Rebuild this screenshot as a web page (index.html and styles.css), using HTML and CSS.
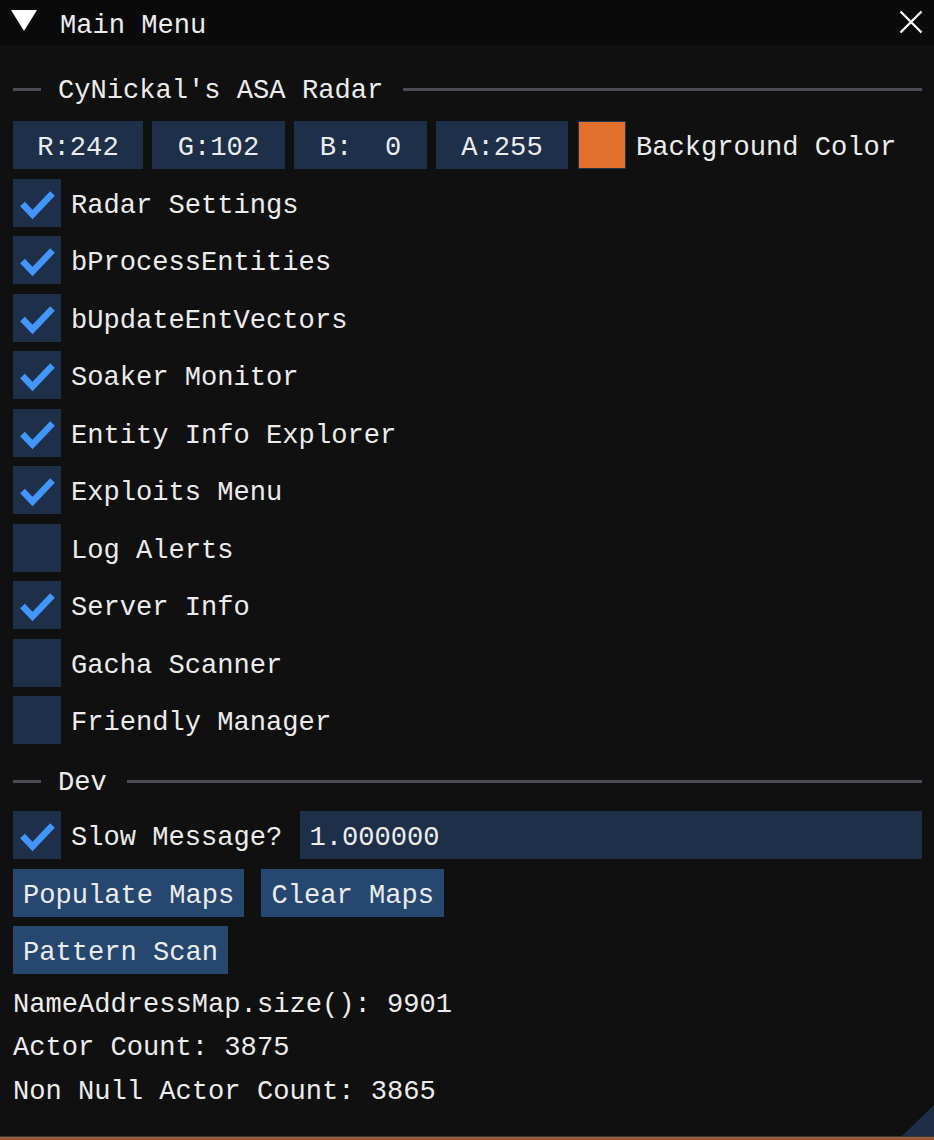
FILE: index.html
```html
<!DOCTYPE html>
<html>
<head>
<meta charset="utf-8">
<title>Main Menu</title>
<link rel="stylesheet" href="styles.css">
</head>
<body>
<div class="window">
  <div class="titlebar">
    <svg class="collapse" width="26" height="21" viewBox="0 0 26 21"><polygon points="0,0 26,0 13,21" fill="#ffffff"/></svg>
    <span class="title">Main Menu</span>
    <svg class="close" width="24" height="24" viewBox="0 0 24 24"><path d="M1.5 1.5 L22.5 22.5 M22.5 1.5 L1.5 22.5" stroke="#ffffff" stroke-width="2.3" fill="none"/></svg>
  </div>
  <div class="content">
    <div class="sep sep-top"><span class="sep-line short"></span><span class="sep-text">CyNickal's ASA Radar</span><span class="sep-line long"></span></div>
    <div class="row">
      <div class="drags">
        <div class="frame drag drag-r">R:242</div>
        <div class="frame drag drag-g">G:102</div>
        <div class="frame drag drag-b">B:  0</div>
        <div class="frame drag drag-a">A:255</div>
      </div>
      <div class="swatch"></div>
      <span class="label label-wide">Background Color</span>
    </div>
    <div class="row"><div class="check"><svg width="48" height="48" viewBox="0 0 48 48"><polyline points="9.5,25 19.5,35.5 39.5,14.5" fill="none" stroke="#4296fa" stroke-width="6.5"/></svg></div><span class="label">Radar Settings</span></div>
    <div class="row"><div class="check"><svg width="48" height="48" viewBox="0 0 48 48"><polyline points="9.5,25 19.5,35.5 39.5,14.5" fill="none" stroke="#4296fa" stroke-width="6.5"/></svg></div><span class="label">bProcessEntities</span></div>
    <div class="row"><div class="check"><svg width="48" height="48" viewBox="0 0 48 48"><polyline points="9.5,25 19.5,35.5 39.5,14.5" fill="none" stroke="#4296fa" stroke-width="6.5"/></svg></div><span class="label">bUpdateEntVectors</span></div>
    <div class="row"><div class="check"><svg width="48" height="48" viewBox="0 0 48 48"><polyline points="9.5,25 19.5,35.5 39.5,14.5" fill="none" stroke="#4296fa" stroke-width="6.5"/></svg></div><span class="label">Soaker Monitor</span></div>
    <div class="row"><div class="check"><svg width="48" height="48" viewBox="0 0 48 48"><polyline points="9.5,25 19.5,35.5 39.5,14.5" fill="none" stroke="#4296fa" stroke-width="6.5"/></svg></div><span class="label">Entity Info Explorer</span></div>
    <div class="row"><div class="check"><svg width="48" height="48" viewBox="0 0 48 48"><polyline points="9.5,25 19.5,35.5 39.5,14.5" fill="none" stroke="#4296fa" stroke-width="6.5"/></svg></div><span class="label">Exploits Menu</span></div>
    <div class="row"><div class="check"></div><span class="label">Log Alerts</span></div>
    <div class="row"><div class="check"><svg width="48" height="48" viewBox="0 0 48 48"><polyline points="9.5,25 19.5,35.5 39.5,14.5" fill="none" stroke="#4296fa" stroke-width="6.5"/></svg></div><span class="label">Server Info</span></div>
    <div class="row"><div class="check"></div><span class="label">Gacha Scanner</span></div>
    <div class="row"><div class="check"></div><span class="label">Friendly Manager</span></div>
    <div class="sep sep-dev"><span class="sep-line short"></span><span class="sep-text">Dev</span><span class="sep-line long"></span></div>
    <div class="row">
      <div class="check"><svg width="48" height="48" viewBox="0 0 48 48"><polyline points="9.5,25 19.5,35.5 39.5,14.5" fill="none" stroke="#4296fa" stroke-width="6.5"/></svg></div>
      <span class="label">Slow Message?</span>
      <div class="frame input">1.000000</div>
    </div>
    <div class="row btn-row">
      <div class="btn">Populate Maps</div>
      <div class="btn">Clear Maps</div>
    </div>
    <div class="row btn-row">
      <div class="btn">Pattern Scan</div>
    </div>
    <div class="stats">
      <div class="stat">NameAddressMap.size(): 9901</div>
      <div class="stat">Actor Count: 3875</div>
      <div class="stat">Non Null Actor Count: 3865</div>
    </div>
  </div>
  <svg class="grip" width="32" height="31" viewBox="0 0 32 31"><polygon points="0,31 32,31 32,0" fill="#1e2e46"/></svg>
</div>
</body>
</html>
```
FILE: styles.css
```css
html, body {
  margin: 0;
  padding: 0;
}
body {
  background: #9b5b37;
  font-family: "Liberation Mono", "DejaVu Sans Mono", monospace;
  font-size: 27.1px;
  color: #ececec;
}
.window {
  position: relative;
  height: 1136px;
  background: #101010;
  border-bottom: 1px solid #3b3b44;
  overflow: hidden;
}
.titlebar {
  display: flex;
  align-items: flex-start;
  height: 45px;
  padding: 0 11px;
  box-sizing: border-box;
  background: #0a0a0a;
}
.collapse {
  margin-top: 10px;
  flex: none;
}
.title {
  margin: 9px 0 0 23px;
  line-height: 34px;
}
.close {
  margin: 10px 0 0 auto;
  flex: none;
}
.content {
  display: flex;
  flex-direction: column;
  gap: 9.5px;
  padding: 0 12px 0 13px;
}
.sep {
  display: flex;
  align-items: center;
  height: 40px;
}
.sep-top {
  margin-top: 24px;
  margin-bottom: 2.5px;
}
.sep-dev {
  margin-top: 8px;
}
.sep-line {
  height: 3px;
  background: #4b4b55;
}
.short {
  width: 28px;
  flex: none;
}
.long {
  flex: 1;
}
.sep-text {
  margin: 0 20px 0 17px;
  padding-top: 3px;
  line-height: 34px;
  white-space: pre;
}
.row {
  display: flex;
  align-items: center;
  height: 48px;
}
.frame {
  height: 48px;
  box-sizing: border-box;
  padding-top: 6px;
  line-height: 42px;
  background: #1d2f49;
  white-space: pre;
}
.drags {
  display: flex;
  gap: 9px;
  flex: none;
}
.drag {
  flex: none;
  text-align: center;
}
.drag-r {
  width: 130px;
}
.drag-g {
  width: 133px;
}
.drag-b {
  width: 133px;
}
.drag-a {
  width: 132px;
}
.swatch {
  width: 48px;
  height: 48px;
  box-sizing: border-box;
  border: 1px solid #22334d;
  background: #e2702d;
  margin-left: 9.5px;
  flex: none;
}
.label {
  margin-left: 10px;
  height: 48px;
  box-sizing: border-box;
  padding-top: 6px;
  line-height: 42px;
  white-space: pre;
}
.label-wide {
  margin-left: 10.5px;
}
.check {
  width: 48px;
  height: 48px;
  background: #1d2f49;
  flex: none;
}
.check svg {
  display: block;
}
.input {
  flex: 1;
  margin-left: 18px;
  padding-left: 9px;
}
.btn-row {
  gap: 17px;
}
.btn {
  height: 48px;
  box-sizing: border-box;
  padding: 6px 10px 0;
  line-height: 42px;
  background: #26476f;
  white-space: pre;
}
.stats {
  margin-top: 4px;
  display: flex;
  flex-direction: column;
  gap: 9.5px;
}
.stat {
  line-height: 34px;
  white-space: pre;
}
.grip {
  position: absolute;
  right: 0;
  bottom: 0;
  display: block;
}
```
